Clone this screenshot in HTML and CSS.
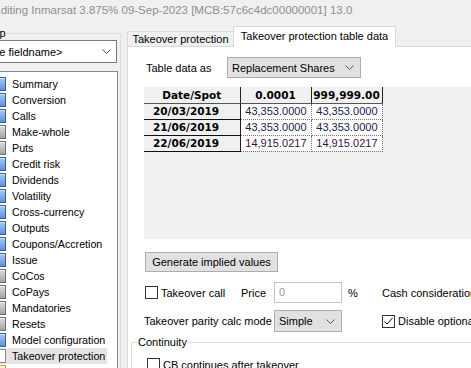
FILE: index.html
```html
<!DOCTYPE html>
<html lang="en">
<head>
  <meta charset="UTF-8" />
  <title>Editing Inmarsat</title>
  <link rel="stylesheet" href="styles.css">
</head>
<body>
  <!-- Barra de título -->
  <div class="titlebar">Editing Inmarsat 3.875% 09-Sep-2023 [MCB:57c6c4dc00000001] 13.0</div>

  <div class="main">
    <!-- Painel esquerdo com a árvore -->
    <div class="sidebar">
      <div class="group-head"><span class="group-label">Group</span><span class="group-line"></span></div>
      <div class="group-body">
        <div class="combo field-combo">
          <span>&lt;Choose fieldname&gt;</span>
          <svg width="9" height="5"><path d="M0.5 0.5 L4.5 4.5 L8.5 0.5" fill="none" stroke="#555"/></svg>
        </div>
        <div class="tree">
          <div class="tree-item"><span class="node"></span>Summary</div>
          <div class="tree-item"><span class="node"></span>Conversion</div>
          <div class="tree-item"><span class="node"></span>Calls</div>
          <div class="tree-item"><span class="node gray"></span>Make-whole</div>
          <div class="tree-item"><span class="node gray"></span>Puts</div>
          <div class="tree-item"><span class="node"></span>Credit risk</div>
          <div class="tree-item"><span class="node"></span>Dividends</div>
          <div class="tree-item"><span class="node"></span>Volatility</div>
          <div class="tree-item"><span class="node"></span>Cross-currency</div>
          <div class="tree-item"><span class="node"></span>Outputs</div>
          <div class="tree-item"><span class="node"></span>Coupons/Accretion</div>
          <div class="tree-item"><span class="node"></span>Issue</div>
          <div class="tree-item"><span class="node gray"></span>CoCos</div>
          <div class="tree-item"><span class="node gray"></span>CoPays</div>
          <div class="tree-item"><span class="node gray"></span>Mandatories</div>
          <div class="tree-item"><span class="node gray"></span>Resets</div>
          <div class="tree-item"><span class="node"></span>Model configuration</div>
          <div class="tree-item selected"><span class="node doc"></span>Takeover protection</div>
          <div class="tree-item"><span class="node pen"></span>MC Submittals</div>
        </div>
      </div>
    </div>

    <!-- Controle de abas -->
    <div class="tabctl">
      <div class="tabs">
        <div class="tab">Takeover protection</div>
        <div class="tab active">Takeover protection table data</div>
        <div class="tab-fill"></div>
      </div>
      <div class="page">
        <div class="data-row">
          <span class="data-label">Table data as</span>
          <div class="combo data-combo">
            <span>Replacement Shares</span>
            <svg width="9" height="5"><path d="M0.5 0.5 L4.5 4.5 L8.5 0.5" fill="none" stroke="#555"/></svg>
          </div>
        </div>

        <div class="grid-area">
          <table class="grid">
            <tr>
              <th class="corner">Date/Spot</th>
              <th>0.0001</th>
              <th>999,999.00</th>
            </tr>
            <tr>
              <th class="rowhead">20/03/2019</th>
              <td>43,353.0000</td>
              <td>43,353.0000</td>
            </tr>
            <tr>
              <th class="rowhead">21/06/2019</th>
              <td>43,353.0000</td>
              <td>43,353.0000</td>
            </tr>
            <tr class="implied">
              <th class="rowhead">22/06/2019</th>
              <td>14,915.0217</td>
              <td>14,915.0217</td>
            </tr>
          </table>
        </div>

        <button class="btn">Generate implied values</button>

        <div class="opts">
          <label class="check first"><span class="box"></span>Takeover call</label>
          <span class="opt-label">Price</span>
          <div class="textbox">0</div>
          <span class="pct">%</span>
          <span class="opt-label">Cash consideration</span>

          <span class="opt-label span2">Takeover parity calc mode</span>
          <div class="combo mode-combo">
            <span>Simple</span>
            <svg width="9" height="5"><path d="M0.5 0.5 L4.5 4.5 L8.5 0.5" fill="none" stroke="#555"/></svg>
          </div>
          <span></span>
          <label class="check"><span class="box"><svg width="11" height="11"><path d="M1.5 5.5 L4 8 L9.5 2" fill="none" stroke="#000"/></svg></span>Disable optional</label>
        </div>

        <fieldset class="continuity">
          <legend>Continuity</legend>
          <label class="check"><span class="box"></span>CB continues after takeover</label>
        </fieldset>
      </div>
    </div>
  </div>
</body>
</html>
```

FILE: styles.css
```css
/* Reset básico */
* {
  box-sizing: border-box;
  margin: 0;
  padding: 0;
}

body {
  width: 471px;
  height: 368px;
  overflow: hidden;
  background: #f0f0f0;
  color: #000;
  font: 11px "Liberation Sans", Arial, sans-serif;
}

.titlebar {
  height: 21px;
  line-height: 21px;
  color: #8f8f8f;
  font-size: 11.5px;
  text-indent: -7px;
  white-space: nowrap;
}

.main {
  display: flex;
  height: 347px;
}

/* Painel esquerdo */
.sidebar {
  width: 121px;
  flex: none;
  overflow: hidden;
}

.group-head {
  display: flex;
  height: 12px;
  margin: 6px 0 0 -25px;
}

.group-label {
  line-height: 12px;
  padding-right: 1px;
}

.group-line {
  flex: 1;
  margin-top: 6px;
  border-top: 1px solid #dcdcdc;
  border-right: 1px solid #dcdcdc;
}

.group-body {
  height: 340px;
  padding-right: 3px;
  border-right: 1px solid #dcdcdc;
}

.combo {
  display: flex;
  align-items: center;
  justify-content: space-between;
  white-space: nowrap;
}

.combo svg {
  flex: none;
}

.field-combo {
  height: 23px;
  margin: 1px 0 0 -44px;
  padding: 0 5px 0 4px;
  background: #fff;
  border: 1px solid #7a7a7a;
}

.tree {
  height: 320px;
  margin: 8px -1px 0 -20px;
  padding-top: 4px;
  font-size: 10.7px;
  background: #fff;
  border: 1px solid #828790;
}

.tree-item {
  display: flex;
  align-items: center;
  gap: 6px;
  width: fit-content;
  height: 16px;
  margin-left: 9px;
  padding-right: 2px;
  white-space: nowrap;
}

.tree-item.selected {
  background: #e5e5e5;
}

.node {
  width: 16px;
  height: 14px;
  flex: none;
  border: 1px solid #2f63a6;
  background: linear-gradient(#a9cbf0, #5b93d8);
  box-shadow: inset 1px 1px 0 rgba(255, 255, 255, 0.5);
}

.node.gray {
  border-color: #6f6f6f;
  background: linear-gradient(#dedede, #a3a3a3);
}

.node.doc {
  border-color: #8a8a8a;
  background: #fff;
  box-shadow: none;
}

.node.pen {
  border-color: #c9a050;
  background: linear-gradient(#fff3c8, #f0c860);
}

/* Abas */
.tabctl {
  width: 520px;
  flex: none;
  margin-left: 6px;
}

.tabs {
  display: flex;
  align-items: flex-end;
  height: 26px;
}

.tab {
  width: 107px;
  height: 16px;
  line-height: 14px;
  text-align: center;
  white-space: nowrap;
  background: #f0f0f0;
  border: 1px solid #d9d9d9;
}

.tab.active {
  width: 163px;
  height: 21px;
  line-height: 18px;
  margin-left: -1px;
  background: #fff;
  border-bottom: none;
}

.tab-fill {
  flex: 1;
  border-bottom: 1px solid #d9d9d9;
}

.page {
  height: 330px;
  padding-top: 10px;
  background: #fff;
  border: 1px solid #d9d9d9;
  border-top: none;
}

.data-row {
  display: flex;
  align-items: center;
  height: 21px;
}

.data-label {
  width: 81px;
  margin-left: 18px;
}

.data-combo {
  width: 134px;
  height: 21px;
  padding: 0 6px 0 4px;
  background: #e1e1e1;
  border: 1px solid #adadad;
}

/* Grade de dados */
.grid-area {
  height: 152px;
  margin: 9px 0 0 16px;
  background: #f0f0f0;
}

.grid {
  border-collapse: collapse;
  table-layout: fixed;
}

.grid th {
  height: 16px;
  padding: 0;
  font: bold 10.5px "DejaVu Sans", sans-serif;
  text-align: center;
  background: #f0f0f0;
  border-right: 1px solid #222;
  border-bottom: 1px solid #555;
}

.grid th.corner {
  width: 96px;
}

.grid th.rowhead {
  height: 16px;
  padding-left: 9px;
  text-align: left;
  border-bottom: 1px solid #111;
}

.grid td {
  width: 71px;
  height: 16px;
  padding: 0 4px 0 0;
  text-align: right;
  color: #22204a;
  background: #fff;
  border-right: 1px dotted #777;
  border-bottom: 1px dotted #777;
}

.grid tr.implied td {
  color: #3c1048;
}

.btn {
  display: block;
  width: 133px;
  height: 20px;
  margin: 13px 0 0 17px;
  font: inherit;
  background: #e1e1e1;
  border: 1px solid #adadad;
}

/* Opções */
.opts {
  display: grid;
  grid-template-columns: 97px 33px 68px 40px auto;
  grid-template-rows: 21px 22px;
  row-gap: 7px;
  align-items: center;
  margin: 10px 0 0 16px;
  white-space: nowrap;
}

.opts .span2 {
  grid-column: span 2;
}

.check {
  display: flex;
  align-items: center;
  gap: 3px;
  white-space: nowrap;
}

.check.first {
  margin-left: 1px;
}

.box {
  display: flex;
  align-items: center;
  justify-content: center;
  width: 13px;
  height: 13px;
  flex: none;
  background: #fff;
  border: 1px solid #333;
}

.textbox {
  height: 21px;
  line-height: 19px;
  padding-left: 4px;
  color: #9a9a9a;
  border: 1px solid #c4c4c4;
}

.pct {
  padding-left: 6px;
}

.mode-combo {
  height: 22px;
  padding: 0 6px 0 4px;
  background: #e1e1e1;
  border: 1px solid #adadad;
}

.continuity {
  margin: 4px 0 0 3px;
  padding: 0 0 0 15px;
  height: 60px;
  border: 1px solid #dcdcdc;
}

.continuity legend {
  margin-left: -10px;
  padding: 0 1px;
}

.continuity .check {
  margin-top: 10px;
}
```
